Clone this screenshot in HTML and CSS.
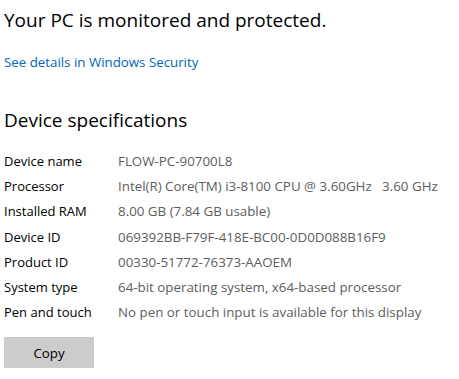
FILE: index.html
```html
<!DOCTYPE html>
<html lang="en">
<head>
    <meta charset="UTF-8">
    <title>About</title>
    <link rel="stylesheet" href="styles.css">
</head>
<body>
    <div class="page">
        <h1 class="status">Your PC is monitored and protected.</h1>
        <a class="link" href="#">See details in Windows Security</a>

        <h2 class="heading">Device specifications</h2>
        <div class="specs">
            <div class="label">Device name</div><div class="value">FLOW-PC-90700L8</div>
            <div class="label">Processor</div><div class="value">Intel(R) Core(TM) i3-8100 CPU @ 3.60GHz &nbsp; 3.60 GHz</div>
            <div class="label">Installed RAM</div><div class="value">8.00 GB (7.84 GB usable)</div>
            <div class="label">Device ID</div><div class="value">069392BB-F79F-418E-BC00-0D0D088B16F9</div>
            <div class="label">Product ID</div><div class="value">00330-51772-76373-AAOEM</div>
            <div class="label">System type</div><div class="value">64-bit operating system, x64-based processor</div>
            <div class="label">Pen and touch</div><div class="value">No pen or touch input is available for this display</div>
        </div>
        <button class="copy">Copy</button>
    </div>
</body>
</html>
```

FILE: styles.css
```css
body, html {
    margin: 0;
    padding: 0;
    background: #ffffff;
    font-family: "Open Sans", sans-serif;
    color: #000000;
}
.page {
    padding: 6px 4px;
    display: flex;
    flex-direction: column;
    align-items: flex-start;
}
.status {
    margin: 0;
    font-size: 19px;
    font-weight: normal;
    line-height: 28px;
}
.link {
    margin-top: 19px;
    font-size: 13.3px;
    color: #0067c0;
    text-decoration: none;
}
.heading {
    margin: 35px 0 0 0;
    font-size: 19px;
    font-weight: normal;
    line-height: 28px;
}
.specs {
    margin-top: 15px;
    display: grid;
    grid-template-columns: 114px auto;
    grid-auto-rows: 25.2px;
    font-size: 13px;
    line-height: 25px;
}
.value {
    color: #5d5d5d;
    font-size: 13.35px;
}
.copy {
    margin-top: 12px;
    width: 90px;
    height: 31px;
    border: none;
    background: #cccccc;
    font-family: "Open Sans", sans-serif;
    font-size: 13.3px;
    color: #000000;
}
```
